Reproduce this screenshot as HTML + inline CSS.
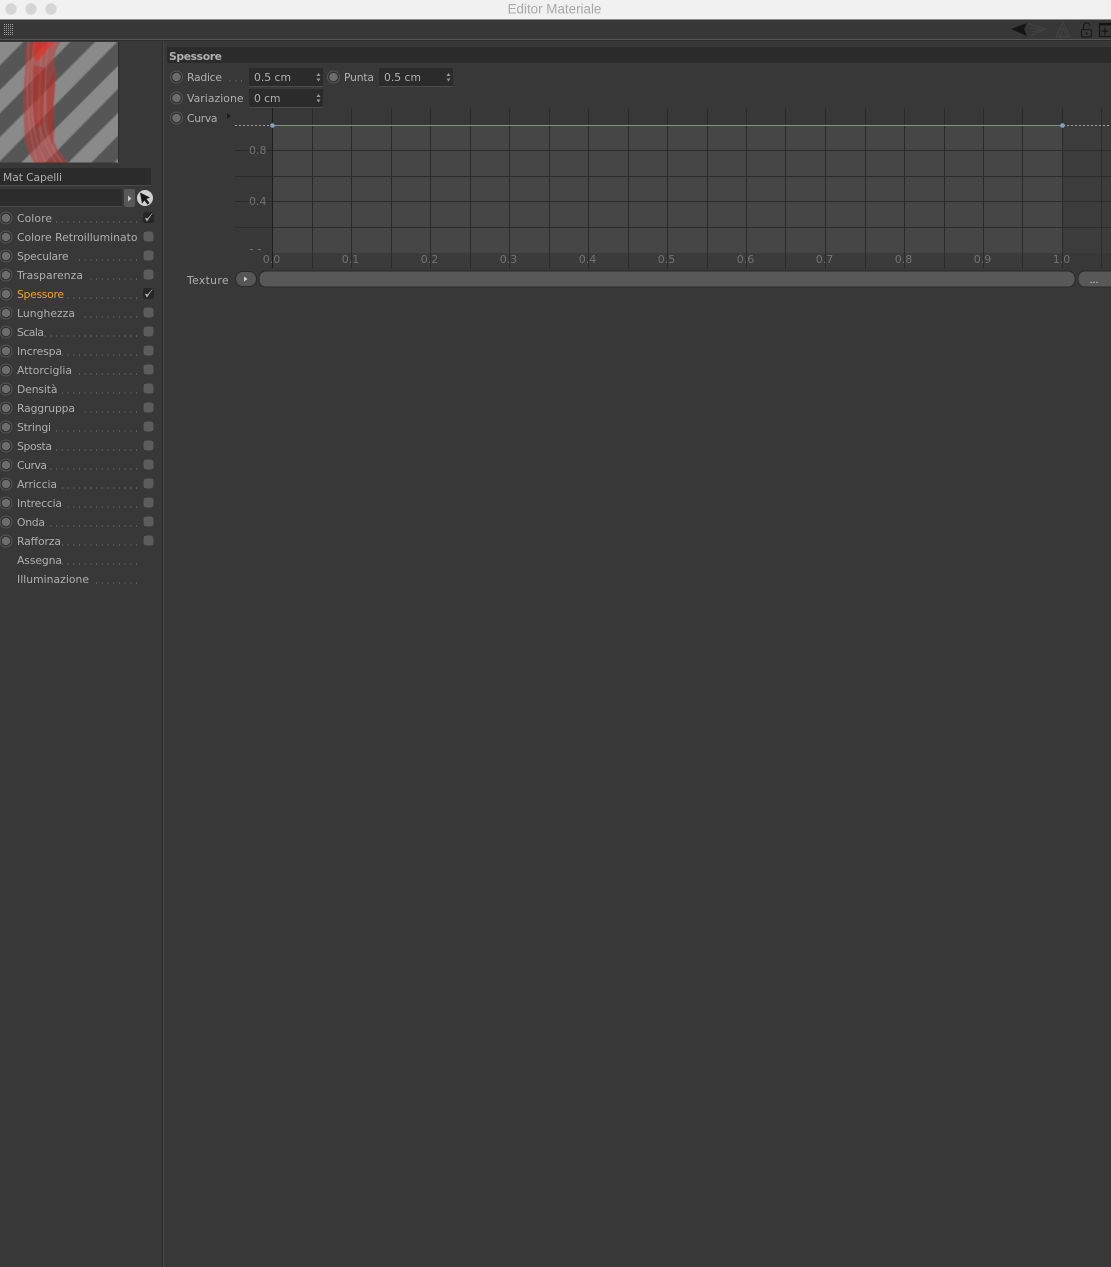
<!DOCTYPE html>
<html><head><meta charset="utf-8"><title>Editor Materiale</title>
<style>
html,body{margin:0;padding:0;background:#383838;width:1111px;height:1267px;overflow:hidden}
svg{display:block;position:absolute;left:0;top:0}
text{font-family:"DejaVu Sans","Liberation Sans",sans-serif;font-size:10.8px;fill:#b0b0b0}
.a{font-size:11px;fill:#727272}
line.d{stroke:#808080;stroke-width:1;stroke-dasharray:1 4.7}
</style></head><body>
<svg width="1111" height="1267" viewBox="0 0 1111 1267" xmlns="http://www.w3.org/2000/svg">
<defs>
<g id="r"><circle r="6.5" fill="#545454"/><circle r="5.4" fill="#2e2e2e"/><circle r="4.3" fill="#6c6c6c"/></g>
<g id="c"><rect x="-5.5" y="-5.5" width="11" height="11" rx="2.5" fill="#333"/><rect x="-5" y="-5" width="10" height="10" rx="2.5" fill="#5c5c5c"/></g>
<g id="k"><rect x="-5.5" y="-5.5" width="11" height="11" rx="2.5" fill="#262626"/><path d="M-3.2 0.4 L-1.6 3.8 L3.8 -4.2 L-0.9 1.2 Z" fill="#bdbdbd" stroke="#bdbdbd" stroke-width=".4"/></g>
<clipPath id="pv"><rect x="0" y="42" width="118.5" height="120.5"/></clipPath>
<pattern id="dots" width="2" height="2" patternUnits="userSpaceOnUse"><rect width="1" height="1" fill="#a0a0a0"/></pattern>
<filter id="bl" x="-5%" y="-5%" width="110%" height="110%"><feGaussianBlur stdDeviation="0.6"/></filter>
</defs>

<!-- title bar -->
<rect width="1111" height="19.5" fill="#f1f1f1"/>
<rect y="19" width="1111" height="1" fill="#8a8a8a"/>
<circle cx="11" cy="9" r="5.7" fill="#d5d5d5"/><circle cx="31" cy="9" r="5.7" fill="#d5d5d5"/><circle cx="51" cy="9" r="5.7" fill="#d5d5d5"/>
<text x="554.5" y="13.5" text-anchor="middle" style="font-family:'Liberation Sans',sans-serif;font-size:13.4px;fill:#a8a8a8">Editor Materiale</text>

<!-- toolbar -->
<rect y="20" width="1111" height="19" fill="#373737"/>
<rect y="39" width="1111" height="1" fill="#565656"/>
<rect y="40" width="1111" height="1" fill="#2c2c2c"/>
<rect x="3" y="24" width="11" height="11" fill="url(#dots)"/>
<path d="M1011 29 L1027 23 L1024 29 L1027 36 Z" fill="#141414"/>
<path d="M1029 24 L1046 29 L1030 36 M1030 28 L1040 29 M1032 32 L1044 29" fill="none" stroke="#434343" stroke-width="1"/>
<path d="M1063 22 L1056 37 L1070 37 Z M1063 27 L1060 37 M1063 27 L1067 37" fill="none" stroke="#444" stroke-width="1"/>
<rect x="1081.5" y="29.5" width="10" height="7.5" rx="1" fill="none" stroke="#1c1c1c" stroke-width="1.3"/>
<path d="M1083.5 29 V26 a3.2 3.2 0 0 1 6.4 0" fill="none" stroke="#1c1c1c" stroke-width="1.3"/>
<rect x="1085.8" y="32" width="1.5" height="3" fill="#1c1c1c"/>
<rect x="1099.5" y="23.5" width="12" height="13" fill="none" stroke="#141414" stroke-width="1.2"/>
<rect x="1099" y="23" width="12" height="2.5" fill="#141414"/>
<path d="M1105 27.5 V35 M1101.5 31 H1108.5" stroke="#141414" stroke-width="1.3"/>

<!-- divider -->
<rect x="162" y="41" width="1" height="1226" fill="#292929"/>
<rect x="163" y="41" width="1" height="1226" fill="#474747"/>

<!-- preview -->
<g clip-path="url(#pv)">
<g filter="url(#bl)">
<rect x="-2" y="40" width="124" height="126" fill="#8a8a8a"/>
<path d="M25 40 L50 40 L-76 166 L-99 166 Z M72 40 L97 40 L-29 166 L-52 166 Z M119 40 L144 40 L18 166 L-5 166 Z M166 40 L191 40 L65 166 L42 166 Z M212 40 L237 40 L111 166 L88 166 Z M259 40 L284 40 L158 166 L135 166 Z" fill="#565656"/>
<path d="M27 40 C24 50 26 60 25 70 C23 90 23 120 25 140 C27 152 32 158 36 166 L70 166 C62 155 55 148 53 135 C51 120 56 90 56 70 C52 60 55 50 62 40 Z" fill="#bd3a36" fill-opacity=".55"/>
<path d="M29 40 C27 50 29 58 28 70 C26 95 28 130 37 162 M35 40 C30 60 33 90 32 110 C33 130 38 150 46 162 M44 40 C38 60 42 90 38 115 C40 135 48 152 56 162 M50 40 C44 60 46 90 44 120 C46 140 54 152 62 162 M41 60 C39 90 37 120 42 145" fill="none" stroke="#d98a85" stroke-opacity=".35" stroke-width="1"/>
<path d="M34 40 H55 C48 50 42 56 36 62 C33 56 33 50 34 40 Z" fill="#ea2f22" fill-opacity=".6"/>
<path d="M33 65 C32 90 32 115 36 130 L44 122 C43 105 45 85 46 68 Z M47 85 C46 110 48 130 52 145 L55 130 C52 115 55 95 55 70 Z" fill="#ad2a22" fill-opacity=".4"/>
</g>
</g>
<rect x="118" y="42" width="1" height="120" fill="#2f2f2f"/>

<!-- name field -->
<rect x="0" y="168" width="151" height="17" fill="#2b2b2b"/>
<rect x="0" y="185" width="151" height="1" fill="#4a4a4a"/>
<text x="3" y="181" textLength="59">Mat Capelli</text>
<rect x="0" y="189" width="122" height="17" fill="#2c2c2c"/>
<rect x="0" y="206" width="122" height="1" fill="#4a4a4a"/>
<rect x="124" y="189" width="11" height="18" rx="2" fill="#585858"/>
<path d="M128 195.5 L131.5 198.5 L128 201.5 Z" fill="#c8c8c8"/>
<circle cx="145" cy="198" r="8" fill="#cfcfcf"/>
<path d="M140 192.5 L150 197.5 L146.5 199 L149.5 203 L147.5 204.5 L144.5 200.5 L142 203.5 Z" fill="#151515"/>

<!-- list -->
<use href="#r" x="6" y="218"/><text x="17" y="222" textLength="35">Colore</text><line class="d" x1="137" y1="222" x2="56" y2="222"/><use href="#k" x="148.5" y="217.5"/>
<use href="#r" x="6" y="237"/><text x="17" y="241" textLength="120.5">Colore Retroilluminato</text><use href="#c" x="148.5" y="236.5"/>
<use href="#r" x="6" y="256"/><text x="17" y="260" textLength="51.5">Speculare</text><line class="d" x1="137" y1="260" x2="74" y2="260"/><use href="#c" x="148.5" y="255.5"/>
<use href="#r" x="6" y="275"/><text x="17" y="279" textLength="66">Trasparenza</text><line class="d" x1="137" y1="279" x2="86" y2="279"/><use href="#c" x="148.5" y="274.5"/>
<use href="#r" x="6" y="294"/><text x="17" y="298" textLength="47" style="fill:#f3a32c">Spessore</text><line class="d" x1="137" y1="298" x2="66" y2="298"/><use href="#k" x="148.5" y="293.5"/>
<use href="#r" x="6" y="313"/><text x="17" y="317" textLength="58">Lunghezza</text><line class="d" x1="137" y1="317" x2="80" y2="317"/><use href="#c" x="148.5" y="312.5"/>
<use href="#r" x="6" y="332"/><text x="17" y="336" textLength="27">Scala</text><line class="d" x1="137" y1="336" x2="44" y2="336"/><use href="#c" x="148.5" y="331.5"/>
<use href="#r" x="6" y="351"/><text x="17" y="355" textLength="45">Increspa</text><line class="d" x1="137" y1="355" x2="62" y2="355"/><use href="#c" x="148.5" y="350.5"/>
<use href="#r" x="6" y="370"/><text x="17" y="374" textLength="55">Attorciglia</text><line class="d" x1="137" y1="374" x2="74" y2="374"/><use href="#c" x="148.5" y="369.5"/>
<use href="#r" x="6" y="389"/><text x="17" y="393" textLength="40.5">Densità</text><line class="d" x1="137" y1="393" x2="62" y2="393"/><use href="#c" x="148.5" y="388.5"/>
<use href="#r" x="6" y="408"/><text x="17" y="412" textLength="58">Raggruppa</text><line class="d" x1="137" y1="412" x2="80" y2="412"/><use href="#c" x="148.5" y="407.5"/>
<use href="#r" x="6" y="427"/><text x="17" y="431" textLength="34">Stringi</text><line class="d" x1="137" y1="431" x2="56" y2="431"/><use href="#c" x="148.5" y="426.5"/>
<use href="#r" x="6" y="446"/><text x="17" y="450" textLength="35">Sposta</text><line class="d" x1="137" y1="450" x2="56" y2="450"/><use href="#c" x="148.5" y="445.5"/>
<use href="#r" x="6" y="465"/><text x="17" y="469" textLength="30">Curva</text><line class="d" x1="137" y1="469" x2="50" y2="469"/><use href="#c" x="148.5" y="464.5"/>
<use href="#r" x="6" y="484"/><text x="17" y="488" textLength="40">Arriccia</text><line class="d" x1="137" y1="488" x2="62" y2="488"/><use href="#c" x="148.5" y="483.5"/>
<use href="#r" x="6" y="503"/><text x="17" y="507" textLength="45">Intreccia</text><line class="d" x1="137" y1="507" x2="68" y2="507"/><use href="#c" x="148.5" y="502.5"/>
<use href="#r" x="6" y="522"/><text x="17" y="526" textLength="28">Onda</text><line class="d" x1="137" y1="526" x2="50" y2="526"/><use href="#c" x="148.5" y="521.5"/>
<use href="#r" x="6" y="541"/><text x="17" y="545" textLength="44">Rafforza</text><line class="d" x1="137" y1="545" x2="62" y2="545"/><use href="#c" x="148.5" y="540.5"/>
<text x="17" y="564" textLength="45">Assegna</text><line class="d" x1="137" y1="564" x2="62" y2="564"/>
<text x="17" y="583" textLength="72">Illuminazione</text><line class="d" x1="137" y1="583" x2="92" y2="583"/>

<!-- section header -->
<rect x="167" y="47" width="944" height="16" fill="#2b2b2b"/>
<text x="169" y="60" textLength="53" style="font-weight:bold;font-size:10.8px;fill:#b0b0b0">Spessore</text>

<!-- fields -->
<use href="#r" x="176.5" y="77"/><text x="187" y="81" textLength="35">Radice</text><line class="d" x1="242" y1="81" x2="226" y2="81"/>
<rect x="249" y="68" width="74" height="18" fill="#2b2b2b"/><rect x="249" y="86" width="74" height="1" fill="#4c4c4c"/>
<text x="254" y="81" textLength="37">0.5 cm</text>
<path d="M316.5 76 L318.5 73 L320.5 76 Z M316.5 78.5 L318.5 81.5 L320.5 78.5 Z" fill="#999"/>
<use href="#r" x="333.5" y="77"/><text x="344" y="81" textLength="30">Punta</text>
<rect x="379" y="68" width="74" height="18" fill="#2b2b2b"/><rect x="379" y="86" width="74" height="1" fill="#4c4c4c"/>
<text x="384" y="81" textLength="37">0.5 cm</text>
<path d="M446.5 76 L448.5 73 L450.5 76 Z M446.5 78.5 L448.5 81.5 L450.5 78.5 Z" fill="#999"/>
<use href="#r" x="176.5" y="98"/><text x="187" y="102" textLength="56.5">Variazione</text>
<rect x="249" y="89" width="74" height="18" fill="#2b2b2b"/><rect x="249" y="107" width="74" height="1" fill="#4c4c4c"/>
<text x="254" y="102" textLength="26.5">0 cm</text>
<path d="M316.5 97 L318.5 94 L320.5 97 Z M316.5 99.5 L318.5 102.5 L320.5 99.5 Z" fill="#999"/>
<use href="#r" x="176.5" y="118"/><text x="187" y="122" textLength="30.5">Curva</text>
<path d="M227 113 L231 116 L227 119 Z" fill="#1c1c1c"/>

<!-- graph -->
<rect x="273" y="125" width="789" height="128" fill="#464646"/>
<rect x="273" y="253" width="789" height="15" fill="#3b3b3b"/>
<rect x="1062" y="125" width="49" height="128" fill="#3c3c3c"/>
<path d="M235 150.5 H1111 M235 176.5 H1111 M235 201.5 H1111 M235 227.5 H1111" stroke="#2b2b2b" stroke-width="1"/>
<path d="M272.5 108 V268 M312.5 108 V268 M351.5 108 V268 M391.5 108 V268 M430.5 108 V268 M470.5 108 V268 M509.5 108 V268 M549.5 108 V268 M588.5 108 V268 M628.5 108 V268 M667.5 108 V268 M707.5 108 V268 M746.5 108 V268 M785.5 108 V268 M825.5 108 V268 M865.5 108 V268 M904.5 108 V268 M944.5 108 V268 M983.5 108 V268 M1022.5 108 V268 M1062.5 108 V268 M1101.5 108 V268" stroke="#2b2b2b" stroke-width="1"/>
<path d="M272.5 108 V268" stroke="#1e1e1e" stroke-width="1"/>
<path d="M235 125.5 H272" stroke="#a0a0a0" stroke-width="1" stroke-dasharray="2 2"/>
<path d="M1063 125.5 H1111" stroke="#a0a0a0" stroke-width="1" stroke-dasharray="2 2"/>
<path d="M272 125.5 H1063" stroke="#7890ac" stroke-width="1"/>
<circle cx="272.5" cy="125.5" r="2.3" fill="#86a2c0"/>
<circle cx="1062.5" cy="125.5" r="2.3" fill="#86a2c0"/>
<text class="a" x="249" y="154">0.8</text>
<text class="a" x="249" y="205">0.4</text>
<path d="M250 249.5 h3 M258 249.5 h3" stroke="#727272" stroke-width="1"/>
<text class="a" x="271.5" y="263" text-anchor="middle">0.0</text>
<text class="a" x="350.5" y="263" text-anchor="middle">0.1</text>
<text class="a" x="429.5" y="263" text-anchor="middle">0.2</text>
<text class="a" x="508.5" y="263" text-anchor="middle">0.3</text>
<text class="a" x="587.5" y="263" text-anchor="middle">0.4</text>
<text class="a" x="666.5" y="263" text-anchor="middle">0.5</text>
<text class="a" x="745.5" y="263" text-anchor="middle">0.6</text>
<text class="a" x="824.5" y="263" text-anchor="middle">0.7</text>
<text class="a" x="903.5" y="263" text-anchor="middle">0.8</text>
<text class="a" x="982.5" y="263" text-anchor="middle">0.9</text>
<text class="a" x="1061.5" y="263" text-anchor="middle">1.0</text>

<!-- texture row -->
<text x="187" y="284" textLength="41.5">Texture</text>
<rect x="235.5" y="271.5" width="21" height="15" rx="7.5" fill="#565656" stroke="#2a2a2a"/>
<path d="M244 276.5 L247.5 279 L244 281.5 Z" fill="#d0d0d0"/>
<rect x="259" y="271" width="816" height="16" rx="7" fill="#585858" stroke="#2a2a2a"/>
<rect x="1078" y="271" width="40" height="16" rx="7" fill="#585858" stroke="#2a2a2a"/>
<text x="1094" y="283" text-anchor="middle" textLength="9" style="font-size:10px;fill:#cfcfcf">...</text>
</svg>
</body></html>
